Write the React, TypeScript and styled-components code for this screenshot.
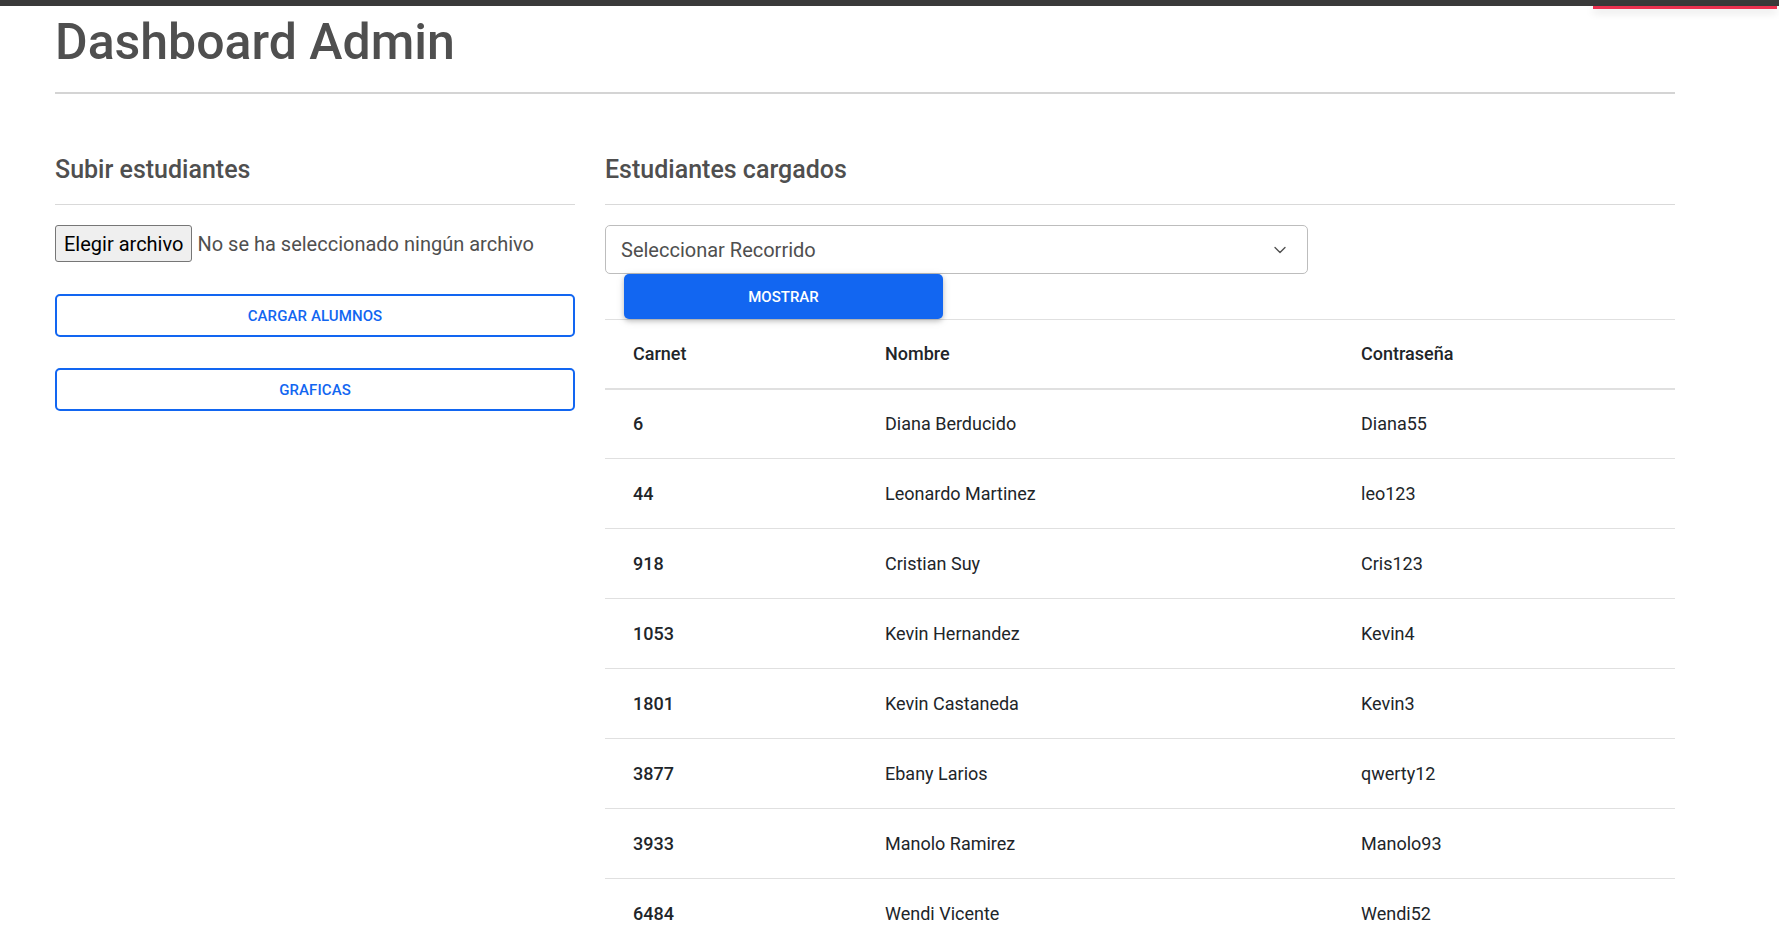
import styled, { createGlobalStyle } from 'styled-components'
import { ChevronDown } from 'lucide-react'

// ---------------------------------------------------------------------------
// Global
// ---------------------------------------------------------------------------

const GlobalStyle = createGlobalStyle`
  html, body {
    margin: 0;
    padding: 0;
    background: #fff;
    font-family: Roboto, 'Liberation Sans', sans-serif;
    color: #4f4f4f;
  }

  * { box-sizing: border-box; }
`

// ---------------------------------------------------------------------------
// Styled components
// ---------------------------------------------------------------------------

const TopBar = styled.div`
  height: 6px;
  background: #3a3a3a;
`

const ToastLine = styled.div`
  position: absolute;
  top: 6px;
  right: 2px;
  width: 184px;
  height: 3px;
  background: #ec3150;
  box-shadow: 0 3px 8px rgba(0, 0, 0, 0.18);
`

const Page = styled.div`
  width: 1620px;
  margin-left: 55px;
`

const PageHeader = styled.header`
  border-bottom: 2px solid #d4d4d4;
  padding-bottom: 20px;
`

const Title = styled.h1`
  margin: 6px 0 0;
  font-size: 50px;
  line-height: 60px;
  font-weight: 500;
  color: #4f4f4f;
`

const Columns = styled.div`
  display: grid;
  grid-template-columns: 520px 1070px;
  column-gap: 30px;
  margin-top: 59px;
  align-items: start;
`

const Column = styled.section`
  display: flex;
  flex-direction: column;
`

const SectionTitle = styled.h5`
  margin: 0;
  font-size: 25px;
  line-height: 34px;
  font-weight: 500;
  color: #4f4f4f;
  padding-bottom: 17px;
  border-bottom: 1px solid #d9d9d9;
`

const FileRow = styled.div`
  display: flex;
  align-items: center;
  gap: 5px;
  margin-top: 20px;
  height: 37px;
  font-size: 20px;
`

const FileButton = styled.button`
  height: 37px;
  padding: 0 8px;
  font-family: Roboto, 'Liberation Sans', sans-serif;
  font-size: 20px;
  color: #000;
  background: #efefef;
  border: 1px solid #767676;
  border-radius: 3px;
`

const FileLabel = styled.span`
  color: #4f4f4f;
  white-space: nowrap;
`

const OutlineButton = styled.button<{ $gap: number }>`
  margin-top: ${(p) => p.$gap}px;
  height: 43px;
  width: 100%;
  border: 2px solid #1266f1;
  border-radius: 5px;
  background: transparent;
  color: #1266f1;
  font-family: Roboto, 'Liberation Sans', sans-serif;
  font-size: 15px;
  font-weight: 500;
  text-transform: uppercase;
  letter-spacing: 0.1px;
`

const SelectBox = styled.div`
  margin-top: 20px;
  width: 703px;
  height: 49px;
  display: flex;
  align-items: center;
  justify-content: space-between;
  padding: 0 17px 0 15px;
  border: 1px solid #bdbdbd;
  border-radius: 5px;
  font-size: 20px;
  color: #4f4f4f;
`

const PrimaryButton = styled.button`
  align-self: flex-start;
  margin-left: 19px;
  width: 319px;
  height: 45px;
  border: none;
  border-radius: 5px;
  background: #1266f1;
  color: #fff;
  font-family: Roboto, 'Liberation Sans', sans-serif;
  font-size: 15px;
  font-weight: 500;
  text-transform: uppercase;
  box-shadow: 0 2px 5px 0 rgba(0, 0, 0, 0.2), 0 2px 10px 0 rgba(0, 0, 0, 0.1);
  position: relative;
  z-index: 1;
`

const Table = styled.table`
  width: 100%;
  border-collapse: collapse;
  border-top: 1px solid #e0e0e0;
  font-size: 18px;
  color: #212529;
`

const HeadCell = styled.th`
  height: 69px;
  padding: 0 0 0 28px;
  text-align: left;
  font-weight: 500;
  border-bottom: 2px solid #e0e0e0;
`

const Row = styled.tr`
  height: 70px;
  border-bottom: 1px solid #e0e0e0;
`

const Cell = styled.td<{ $strong?: boolean }>`
  padding: 0 0 0 28px;
  font-weight: ${(p) => (p.$strong ? 500 : 400)};
`

// ---------------------------------------------------------------------------
// Data
// ---------------------------------------------------------------------------

const students = [
  { carnet: '6', nombre: 'Diana Berducido', pass: 'Diana55' },
  { carnet: '44', nombre: 'Leonardo Martinez', pass: 'leo123' },
  { carnet: '918', nombre: 'Cristian Suy', pass: 'Cris123' },
  { carnet: '1053', nombre: 'Kevin Hernandez', pass: 'Kevin4' },
  { carnet: '1801', nombre: 'Kevin Castaneda', pass: 'Kevin3' },
  { carnet: '3877', nombre: 'Ebany Larios', pass: 'qwerty12' },
  { carnet: '3933', nombre: 'Manolo Ramirez', pass: 'Manolo93' },
  { carnet: '6484', nombre: 'Wendi Vicente', pass: 'Wendi52' },
]

// ---------------------------------------------------------------------------
// Component
// ---------------------------------------------------------------------------

export default function App() {
  return (
    <>
      <GlobalStyle />
      <TopBar />
      <ToastLine />

      <Page>
        <PageHeader>
          <Title>Dashboard Admin</Title>
        </PageHeader>

        <Columns>
          <Column>
            <SectionTitle>Subir estudiantes</SectionTitle>
            <FileRow>
              <FileButton>Elegir archivo</FileButton>
              <FileLabel>No se ha seleccionado ningún archivo</FileLabel>
            </FileRow>
            <OutlineButton $gap={32}>Cargar alumnos</OutlineButton>
            <OutlineButton $gap={31}>Graficas</OutlineButton>
          </Column>

          <Column>
            <SectionTitle>Estudiantes cargados</SectionTitle>
            <SelectBox>
              Seleccionar Recorrido
              <ChevronDown size={20} strokeWidth={1.6} color="#4f4f4f" />
            </SelectBox>
            <PrimaryButton>Mostrar</PrimaryButton>

            <Table>
              <colgroup>
                <col style={{ width: 252 }} />
                <col style={{ width: 476 }} />
                <col />
              </colgroup>
              <thead>
                <tr>
                  <HeadCell>Carnet</HeadCell>
                  <HeadCell>Nombre</HeadCell>
                  <HeadCell>Contraseña</HeadCell>
                </tr>
              </thead>
              <tbody>
                {students.map((s) => (
                  <Row key={s.carnet}>
                    <Cell $strong>{s.carnet}</Cell>
                    <Cell>{s.nombre}</Cell>
                    <Cell>{s.pass}</Cell>
                  </Row>
                ))}
              </tbody>
            </Table>
          </Column>
        </Columns>
      </Page>
    </>
  )
}
